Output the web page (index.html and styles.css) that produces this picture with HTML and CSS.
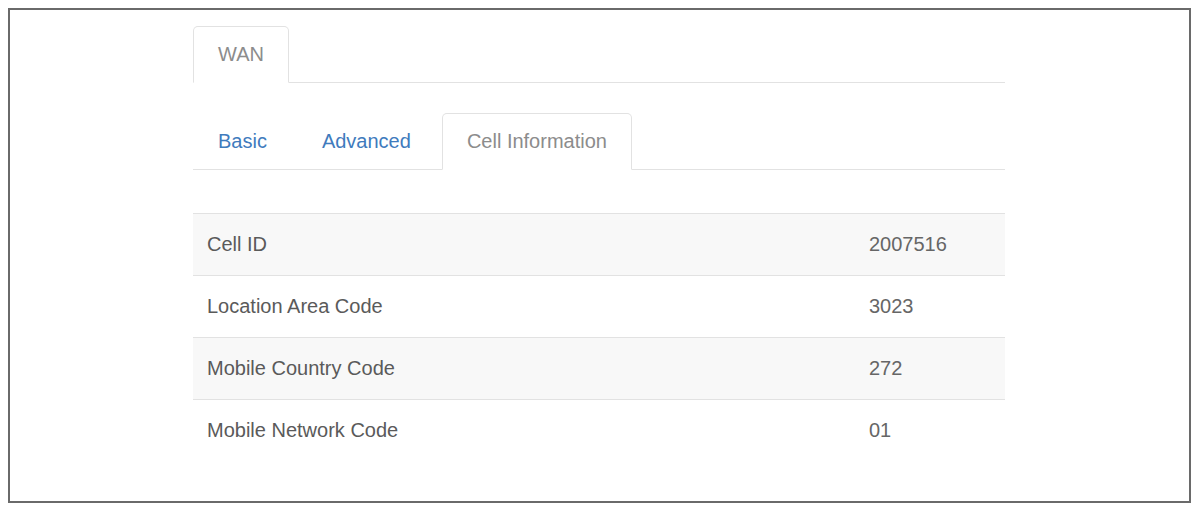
FILE: index.html
```html
<!DOCTYPE html>
<html lang="en">
<head>
  <meta charset="UTF-8">
  <meta name="viewport" content="width=device-width, initial-scale=1.0">
  <title>Cell Information</title>
  <link rel="stylesheet" href="styles.css">
</head>
<body>
  <div class="frame">
    <div class="content">
      <ul class="tabs">
        <li class="active"><a href="#">WAN</a></li>
      </ul>

      <ul class="tabs sub-tabs">
        <li><a href="#">Basic</a></li>
        <li><a href="#">Advanced</a></li>
        <li class="active"><a href="#">Cell Information</a></li>
      </ul>

      <table class="info-table">
        <tr>
          <td class="label">Cell ID</td>
          <td>2007516</td>
        </tr>
        <tr>
          <td class="label">Location Area Code</td>
          <td>3023</td>
        </tr>
        <tr>
          <td class="label">Mobile Country Code</td>
          <td>272</td>
        </tr>
        <tr>
          <td class="label">Mobile Network Code</td>
          <td>01</td>
        </tr>
      </table>
    </div>
  </div>
</body>
</html>
```

FILE: styles.css
```css
body {
  font-family: "Liberation Sans", Arial, sans-serif;
  font-size: 20px;
  color: #555;
  background-color: #fff;
  margin: 0;
  padding: 8px 2px 3px 8px;
}

.frame {
  box-sizing: border-box;
  width: 1183px;
  height: 495px;
  border: 2px solid #6a6a6a;
  background: #fff;
}

.content {
  width: 812px;
  padding: 16px 0 0 183px;
}

.tabs {
  list-style: none;
  margin: 0;
  padding: 0;
  display: flex;
  border-bottom: 1px solid #e2e2e2;
}

.tabs li {
  margin-bottom: -1px;
  margin-right: 5px;
}

.tabs a {
  display: block;
  padding: 16px 24px;
  line-height: 23px;
  border: 1px solid transparent;
  border-radius: 5px 5px 0 0;
  color: #3f7bbd;
  text-decoration: none;
}

.tabs .active a {
  color: #8c8c8c;
  background: #fff;
  border-color: #e2e2e2 #e2e2e2 transparent;
}

.sub-tabs {
  margin-top: 30px;
}

.sub-tabs li:nth-child(2) {
  margin-right: 6px;
}

.info-table {
  width: 100%;
  margin-top: 43px;
  border-collapse: collapse;
}

.info-table td {
  padding: 19px 14px 19px 14px;
  line-height: 23px;
  border-top: 1px solid #e2e2e2;
  color: #666;
}

.info-table td.label {
  width: 634px;
  color: #5a5a5a;
}

.info-table tr:nth-child(odd) {
  background: #f8f8f8;
}
```
